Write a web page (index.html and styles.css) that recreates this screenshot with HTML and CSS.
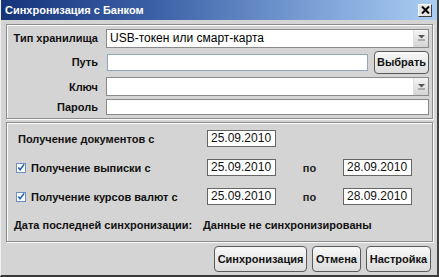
FILE: index.html
```html
<!DOCTYPE html>
<html lang="ru">
<head>
<meta charset="utf-8">
<link rel="stylesheet" href="styles.css">
</head>
<body>
<div class="window">
  <div class="titlebar">
    <span class="title">Синхронизация с Банком</span>
    <span class="close">
      <svg width="9" height="8" viewBox="0 0 9 8"><path d="M1 0.5 L8 7.5 M8 0.5 L1 7.5" stroke="#000" stroke-width="2"/></svg>
    </span>
  </div>
  <div class="content">
    <div class="panel panel-top">
      <div class="row r1">
        <span class="label">Тип хранилища</span>
        <div class="combo"><span class="combo-text">USB-токен или смарт-карта</span><span class="arrow"><svg width="7" height="6" viewBox="0 0 7 6"><path d="M0 0 H7 L3.5 3.5 Z" fill="#555"/><rect x="0" y="4.5" width="7" height="1" fill="#777"/></svg></span></div>
      </div>
      <div class="row r2">
        <span class="label">Путь</span>
        <div class="input path"></div>
        <button class="btn choose">Выбрать</button>
      </div>
      <div class="row r3">
        <span class="label">Ключ</span>
        <div class="combo"><span class="combo-text"></span><span class="arrow"><svg width="7" height="6" viewBox="0 0 7 6"><path d="M0 0 H7 L3.5 3.5 Z" fill="#555"/><rect x="0" y="4.5" width="7" height="1" fill="#777"/></svg></span></div>
      </div>
      <div class="row r4">
        <span class="label">Пароль</span>
        <div class="input grow"></div>
      </div>
    </div>
    <div class="panel panel-bottom">
      <div class="drow">
        <span class="dlabel nocheck">Получение документов с</span>
        <span class="date">25.09.2010</span>
      </div>
      <div class="drow">
        <span class="dlabel"><span class="check"><svg width="9" height="9" viewBox="0 0 9 9"><path d="M1.5 4.5 L3.5 7 L8 1" stroke="#1f5fb0" stroke-width="1.8" fill="none"/></svg></span>Получение выписки с</span>
        <span class="date">25.09.2010</span>
        <span class="po">по</span>
        <span class="date">28.09.2010</span>
      </div>
      <div class="drow">
        <span class="dlabel"><span class="check"><svg width="9" height="9" viewBox="0 0 9 9"><path d="M1.5 4.5 L3.5 7 L8 1" stroke="#1f5fb0" stroke-width="1.8" fill="none"/></svg></span>Получение курсов валют с</span>
        <span class="date">25.09.2010</span>
        <span class="po">по</span>
        <span class="date">28.09.2010</span>
      </div>
      <div class="lastsync">
        <span class="dlabel-last">Дата последней синхронизации:</span>
        <span>Данные не синхронизированы</span>
      </div>
    </div>
    <div class="buttons">
      <button class="btn b-sync">Синхронизация</button>
      <button class="btn b-cancel">Отмена</button>
      <button class="btn b-set">Настройка</button>
    </div>
  </div>
</div>
</body>
</html>
```
FILE: styles.css
```css
* { box-sizing: border-box; }
html, body { margin: 0; padding: 0; }
body {
  width: 439px;
  height: 277px;
  overflow: hidden;
  background: #d4d4d4;
  font-family: "Liberation Sans", Arial, sans-serif;
  white-space: nowrap;
}
.window {
  width: 439px;
  height: 277px;
  background: #d4d4d4;
  border-right: 2px solid #404040;
  border-bottom: 2px solid #3a3a3a;
  border-left: 1px solid #f0f0f0;
  display: flex;
  flex-direction: column;
}
.titlebar {
  height: 20px;
  flex: none;
  background: linear-gradient(to right, #16347a 0%, #3c60a6 35%, #7ba1d6 72%, #aacdf2 100%);
  display: flex;
  align-items: center;
  justify-content: space-between;
  padding: 0 5px 0 4px;
}
.title {
  color: #fff;
  font-weight: bold;
  font-size: 11px;
}
.close {
  width: 14px;
  height: 13px;
  background: #e4e4e4;
  border: 1px solid;
  border-color: #fff #404040 #404040 #fff;
  display: flex;
  align-items: center;
  justify-content: center;
}
.content {
  flex: 1;
  padding: 4px 4px 2px 5px;
  display: flex;
  flex-direction: column;
  gap: 3px;
}
.panel {
  border: 1px solid #8c8c8c;
  box-shadow: 1px 1px 0 #fafafa, inset 1px 1px 0 #fafafa;
}
.panel-top {
  flex: none;
  height: 95px;
  padding: 2px 3px 0 6px;
  display: flex;
  flex-direction: column;
}
.row {
  display: flex;
  align-items: center;
  gap: 8px;
}
.r1 { height: 22px; }
.r2 { height: 26px; }
.r3 { height: 23px; }
.r4 { height: 18px; }
.row .label {
  width: 85px;
  text-align: right;
  font-weight: bold;
  font-size: 11px;
  color: #111;
  flex: none;
}
.combo {
  flex: 1;
  height: 19px;
  background: #fff;
  border: 1px solid #8a8a8a;
  display: flex;
  align-items: center;
}
.combo-text {
  flex: 1;
  font-size: 12px;
  padding-left: 3px;
  color: #000;
}
.arrow {
  width: 15px;
  height: 17px;
  background: linear-gradient(#f4f4f4, #d4d4d4);
  border-left: 1px solid #e0e0e0;
  display: flex;
  align-items: center;
  justify-content: center;
}
.input {
  height: 17px;
  background: #fff;
  border: 1px solid #888;
}
.input.path { flex: 1; border-color: #93a5b8; }
.input.grow { flex: 1; height: 16px; }
.r2 { gap: 0; }
.r2 .label { margin-right: 9px; }
.r2 .path { margin-right: 6px; }
.btn {
  font-family: "Liberation Sans", Arial, sans-serif;
  font-weight: bold;
  font-size: 11px;
  color: #111;
  background: linear-gradient(#f8f8f8, #dcdcdc);
  border: 1px solid #5a5a5a;
  border-radius: 4px;
  padding: 0;
  height: 26px;
}
.btn.choose { height: 23px; width: 55px; }
.panel-bottom {
  flex: none;
  height: 120px;
  padding: 1px 0 0 9px;
  display: flex;
  flex-direction: column;
}
.drow {
  height: 29px;
  flex: none;
  display: flex;
  align-items: center;
}
.dlabel {
  width: 191px;
  font-weight: bold;
  font-size: 11px;
  color: #111;
  display: flex;
  align-items: center;
}
.dlabel.nocheck { padding-left: 2px; }
.check {
  width: 10px;
  height: 10px;
  background: #fff;
  border: 1px solid #6a8fc0;
  margin-right: 5px;
  display: flex;
  align-items: center;
  justify-content: center;
}
.date {
  width: 69px;
  height: 17px;
  background: #fff;
  border: 1px solid #666;
  font-size: 12px;
  padding-left: 3px;
  line-height: 15px;
  color: #111;
}
.po {
  width: 67px;
  text-align: center;
  font-weight: bold;
  font-size: 11px;
  color: #222;
}
.lastsync {
  height: 28px;
  display: flex;
  align-items: center;
  margin-left: -2px;
  font-weight: bold;
  font-size: 11px;
  color: #111;
}
.dlabel-last { width: 189px; }
.buttons {
  flex: 1;
  display: flex;
  justify-content: flex-end;
  align-items: center;
  gap: 5px;
  padding-right: 2px;
}
.b-sync { width: 93px; }
.b-cancel { width: 49px; }
.b-set { width: 65px; }
```
